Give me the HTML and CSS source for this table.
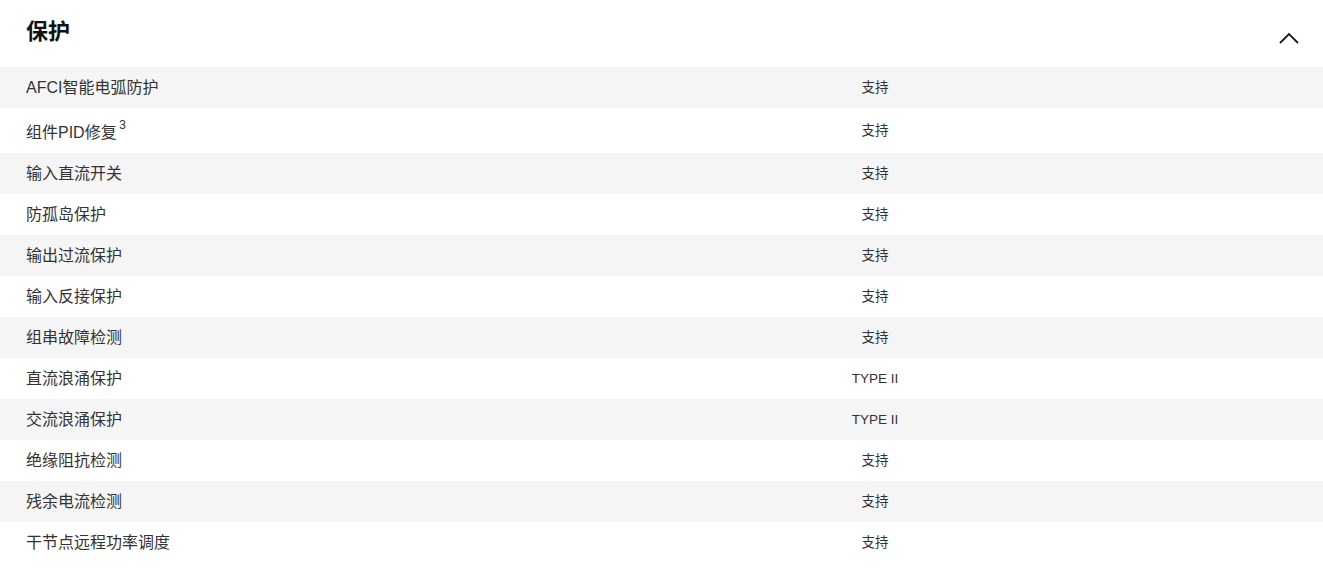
FILE: index.html
```html
<!DOCTYPE html>
<html lang="zh-CN">
<head>
<meta charset="utf-8">
<title>保护</title>
<link rel="stylesheet" href="styles.css">
</head>
<body>
<section class="spec">
  <header class="spec-head">
    <h2 class="spec-title">保护</h2>
    <svg class="chevron" width="20" height="12" viewBox="0 0 20 12" aria-hidden="true"><path d="M1 11 L10 2 L19 11" fill="none" stroke="#1a1a1a" stroke-width="1.8"/></svg>
  </header>
  <div class="rows">
    <div class="row"><div class="label">AFCI智能电弧防护</div><div class="value">支持</div></div>
    <div class="row"><div class="label">组件PID修复 <sup class="note">3</sup></div><div class="value">支持</div></div>
    <div class="row"><div class="label">输入直流开关</div><div class="value">支持</div></div>
    <div class="row"><div class="label">防孤岛保护</div><div class="value">支持</div></div>
    <div class="row"><div class="label">输出过流保护</div><div class="value">支持</div></div>
    <div class="row"><div class="label">输入反接保护</div><div class="value">支持</div></div>
    <div class="row"><div class="label">组串故障检测</div><div class="value">支持</div></div>
    <div class="row"><div class="label">直流浪涌保护</div><div class="value">TYPE II</div></div>
    <div class="row"><div class="label">交流浪涌保护</div><div class="value">TYPE II</div></div>
    <div class="row"><div class="label">绝缘阻抗检测</div><div class="value">支持</div></div>
    <div class="row"><div class="label">残余电流检测</div><div class="value">支持</div></div>
    <div class="row"><div class="label">干节点远程功率调度</div><div class="value">支持</div></div>
  </div>
</section>
</body>
</html>
```
FILE: styles.css
```css
html, body {
  margin: 0;
  padding: 0;
  background: #ffffff;
}
body {
  font-family: "Liberation Sans", "Noto Sans CJK SC", sans-serif;
  color: #333333;
}
.spec-head {
  height: 67px;
  display: flex;
  align-items: center;
  justify-content: space-between;
  padding: 0 24px 0 26px;
  box-sizing: border-box;
}
.spec-title {
  margin: 0 0 4px 0;
  font-size: 22px;
  font-weight: 700;
  color: #111111;
  line-height: 30px;
}
.chevron {
  display: block;
  margin-top: 8px;
}
.rows {
  display: flex;
  flex-direction: column;
}
.row {
  display: grid;
  grid-template-columns: 401px 1fr;
  align-items: center;
  padding: 10px 0 10px 26px;
  line-height: 21px;
}
.row:nth-child(odd) {
  background: #f5f5f5;
}
.label {
  font-size: 16px;
  color: #333333;
}
.value {
  font-size: 13.5px;
  text-align: center;
  color: #333333;
}
.note {
  font-size: 12px;
  line-height: 14px;
  vertical-align: 9px;
  margin-left: -2px;
}
```
